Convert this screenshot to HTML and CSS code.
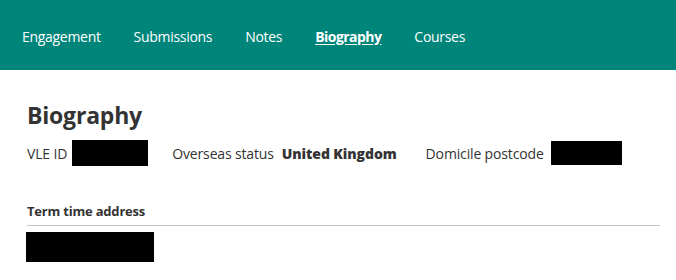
FILE: index.html
```html
<!DOCTYPE html>
<html lang="en">
<head>
<meta charset="utf-8">
<title>Biography</title>
<link rel="stylesheet" href="styles.css">
</head>
<body>
<nav class="nav">
  <a class="nav-link" href="#">Engagement</a>
  <a class="nav-link" href="#">Submissions</a>
  <a class="nav-link" href="#">Notes</a>
  <a class="nav-link active" href="#">Biography</a>
  <a class="nav-link" href="#">Courses</a>
</nav>
<main class="content">
  <h1 class="title">Biography</h1>
  <div class="fields">
    <div class="field"><span class="label">VLE ID</span><span class="redact redact-vle"></span></div>
    <div class="field"><span class="label">Overseas status</span><span class="value">United Kingdom</span></div>
    <div class="field"><span class="label">Domicile postcode</span><span class="redact redact-post"></span></div>
  </div>
  <section class="section">
    <h2 class="section-title">Term time address</h2>
    <span class="redact redact-addr"></span>
  </section>
</main>
</body>
</html>
```
FILE: styles.css
```css
html, body {
  margin: 0;
  padding: 0;
  background: #fff;
  font-family: "Open Sans", "Noto Sans", sans-serif;
  color: #333;
}
.nav {
  height: 70px;
  background: #00857a;
  display: flex;
  align-items: center;
  padding: 0 0 0 22px;
  gap: 33px;
  box-sizing: border-box;
}
.nav-link {
  color: #fff;
  text-decoration: none;
  font-size: 14px;
  letter-spacing: -0.3px;
  margin-top: 2px;
}
.nav-link.active {
  font-weight: 700;
  letter-spacing: -0.55px;
  text-decoration: underline;
  text-underline-offset: 2px;
}
.content {
  padding: 0 16px 0 27px;
}
.title {
  margin: 28px 0 0;
  font-size: 23px;
  font-weight: 700;
  line-height: 34px;
  color: #333;
  letter-spacing: -0.2px;
}
.fields {
  display: flex;
  align-items: center;
  margin-top: 8px;
  gap: 24px;
}
.field {
  display: flex;
  align-items: center;
  gap: 5px;
  font-size: 14px;
  letter-spacing: -0.15px;
}
.field + .field + .field {
  margin-left: 5px;
}
.value {
  font-weight: 800;
  margin-left: 3px;
  letter-spacing: -0.1px;
}
.redact {
  display: block;
  background: #000;
}
.redact-vle { width: 76px; height: 26px; }
.redact-post { width: 71px; height: 24px; margin-left: 2px; }
.section {
  margin-top: 36px;
}
.section-title {
  margin: 0;
  font-size: 13px;
  font-weight: 700;
  letter-spacing: -0.2px;
  line-height: 18px;
  padding-bottom: 5px;
  border-bottom: 1px solid #c4c4c4;
}
.redact-addr {
  width: 128px;
  height: 30px;
  margin: 6px 0 0 -1px;
}
```
